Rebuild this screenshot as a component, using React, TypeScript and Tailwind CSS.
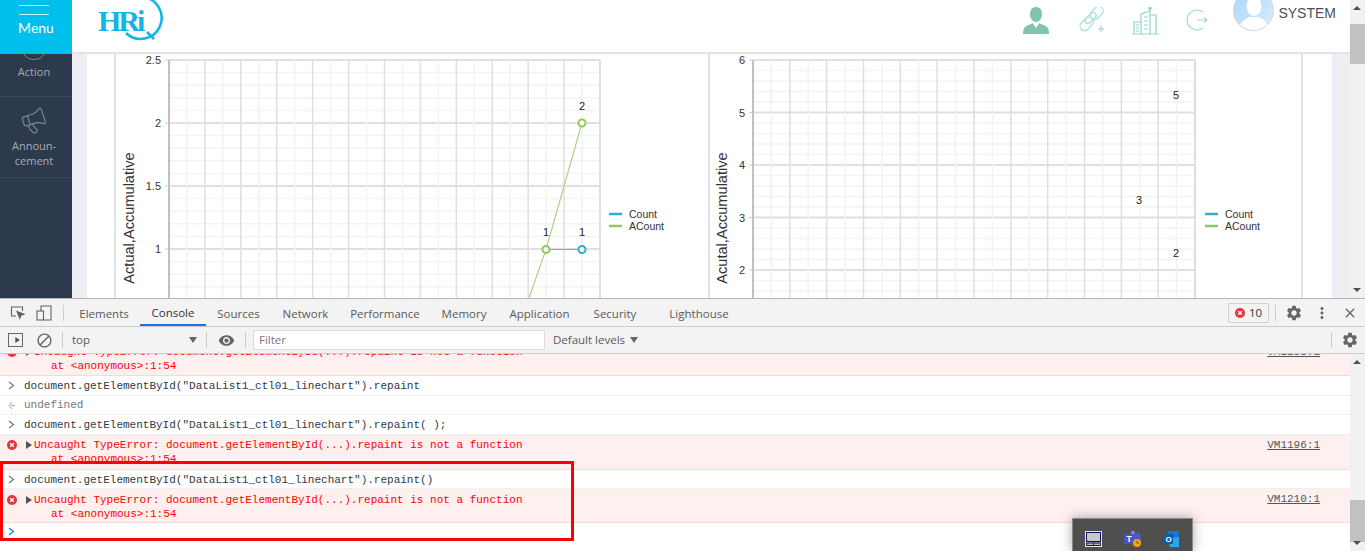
import { Megaphone } from "lucide-react";
import {
  MdBlock,
  MdClose,
  MdMoreVert,
  MdPlayArrow,
  MdSettings,
  MdVisibility,
} from "react-icons/md";

const TABS = [
  { label: "Elements", cls: "w-[72px]" },
  { label: "Console", cls: "w-[66px] text-[#333] border-b-2 border-[#1a73e8]" },
  { label: "Sources", cls: "w-[65px]" },
  { label: "Network", cls: "w-[69px]" },
  { label: "Performance", cls: "w-[90px]" },
  { label: "Memory", cls: "w-[68px]" },
  { label: "Application", cls: "w-[83px]" },
  { label: "Security", cls: "w-[68px]" },
  { label: "Lighthouse", cls: "ml-[9px] w-[82px]" },
];

const INPUT_1 = 'document.getElementById("DataList1_ctl01_linechart").repaint';
const RED = "text-[#ff0000]";

function range(n: number) {
  return Array.from({ length: n }, (_, i) => i);
}

type ChartProps = {
  title: string;
  titleX: number;
  plotX: number;
  plotW: number;
  firstY: number;
  stepY: number;
  ticks: string[];
  legendGap?: number;
  children?: React.ReactNode;
};

function Chart({ title, titleX, plotX, plotW, firstY, stepY, ticks, legendGap = 9, children }: ChartProps) {
  const stepX = plotW / 12;
  const minorY = stepY / 5;
  const count = Math.ceil((244 - firstY) / minorY);
  const legendX = plotX + plotW + legendGap;
  return (
    <div className="w-[594px] h-full border-l-2 border-[#e3e3e3] last:border-r-2 last:w-[595px]">
      <svg width="592" height="244" className="block font-['Liberation_Sans',sans-serif]">
        {range(count).map((i) => (
          <line
            key={i}
            x1={plotX}
            x2={plotX + plotW}
            y1={firstY + i * minorY}
            y2={firstY + i * minorY}
            stroke={i % 5 === 0 ? "#e0e0e0" : "#f3f3f3"}
            strokeWidth={i % 5 === 0 ? 2 : 1.5}
          />
        ))}
        {range(25).map((i) => (
          <line
            key={i}
            x1={plotX + (i * stepX) / 2}
            x2={plotX + (i * stepX) / 2}
            y1={firstY}
            y2={244}
            stroke={i % 2 === 0 ? "#dfdfdf" : "#f3f3f3"}
            strokeWidth={i === 24 ? 2 : 1.5}
          />
        ))}
        <line x1={plotX} x2={plotX} y1={firstY} y2={244} stroke="#999" />
        {ticks.map((t, i) => (
          <g key={t}>
            <line
              x1={plotX - 4}
              x2={plotX}
              y1={firstY + i * stepY}
              y2={firstY + i * stepY}
              stroke="#ccc"
            />
            <text
              x={plotX - 8}
              y={firstY + i * stepY + 4}
              textAnchor="end"
              fontSize="11"
              fill="#333"
            >
              {t}
            </text>
          </g>
        ))}
        <text
          transform={`translate(${titleX},164) rotate(-90)`}
          textAnchor="middle"
          fontSize="14.6"
          fill="#333"
        >
          {title}
        </text>
        <line x1={legendX} x2={legendX + 13} y1={160} y2={160} stroke="#31aecb" strokeWidth="2.5" />
        <line x1={legendX} x2={legendX + 13} y1={172} y2={172} stroke="#8fca55" strokeWidth="2.5" />
        <text x={legendX + 20} y={164} fontSize="10.5" fill="#333">
          Count
        </text>
        <text x={legendX + 20} y={176} fontSize="10.5" fill="#333">
          ACount
        </text>
        {children}
      </svg>
    </div>
  );
}

function DataLabel({ x, y, v }: { x: number; y: number; v: string }) {
  return (
    <text x={x} y={y} textAnchor="middle" fontSize="11" fill="#222">
      {v}
    </text>
  );
}

function ErrorIcon() {
  return (
    <svg width="10" height="10" viewBox="0 0 10 10" className="shrink-0">
      <circle cx="5" cy="5" r="5" fill="#e8323c" />
      <path d="M3.2 3.2l3.6 3.6M6.8 3.2l-3.6 3.6" stroke="#fff" strokeWidth="1.4" />
    </svg>
  );
}

function Chevron({ color = "#777" }: { color?: string }) {
  return (
    <svg width="7" height="9" viewBox="0 0 7 9" className="shrink-0">
      <path d="M1 1l4.5 3.5L1 8" fill="none" stroke={color} strokeWidth="1.2" />
    </svg>
  );
}

function InputRow({ text, cls = "h-[20px]" }: { text: string; cls?: string }) {
  return (
    <div className={`${cls} flex items-center pl-[8px] border-b border-[#efefef] text-[#303942]`}>
      <Chevron />
      <span className="ml-[9px]">{text}</span>
    </div>
  );
}

function ErrorRow({ source, cls = "h-[35px] pt-[3px]" }: { source: string; cls?: string }) {
  return (
    <div className={`${cls} relative bg-[#fff0f0] border-b border-[#ffd6d6] pl-[7px] overflow-hidden`}>
      <div className="flex items-center h-[14px]">
        <ErrorIcon />
        <span className="ml-[9px] mr-[2px] w-0 h-0 border-y-[4px] border-y-transparent border-l-[6px] border-l-[#555]" />
        <span className={RED}>Uncaught TypeError: document.getElementById(...).repaint is not a function</span>
      </div>
      <div className={`${RED} h-[14px] leading-[14px] pl-[44px]`}>at &lt;anonymous&gt;:1:54</div>
      <span className="absolute right-[30px] top-[3px] leading-[14px] underline text-[#555]">{source}</span>
    </div>
  );
}

function TopIcons() {
  return (
    <div className="ml-auto flex items-start h-full">
      <svg width="28" height="28" viewBox="0 0 28 28" className="mt-[6px]" fill="#7fc4ab">
        <path d="M14 1c4 0 6 3 6 7 0 4-2.500 8-6 8s-6-4-6-8c0-4 2-7 6-7z" />
        <path d="M1 28c0-3 .5-6 2.500-7.500C6 19 9 18.500 10.500 17l3.500 5 3.500-5c1.500 1.500 4.500 2 7 3.500 2 1.500 2.500 4.500 2.500 7.500z" />
      </svg>
      <svg width="28" height="28" viewBox="0 0 28 28" className="ml-[28px] mt-[7px]" fill="none" stroke="#a9e0df" strokeWidth="1.3">
        <rect x="12" y="1.500" width="15" height="9" rx="4.500" transform="rotate(-45 19 7)" />
        <rect x="1" y="13" width="15" height="9" rx="4.500" transform="rotate(-45 8 17)" />
        <rect x="7" y="8" width="13" height="6" rx="3" transform="rotate(-45 13 12)" />
        <path d="M20 22h6M23 19v6" stroke="#b7d8d4" />
      </svg>
      <svg width="28" height="28" viewBox="0 0 28 28" className="ml-[26px] mt-[7px]" fill="none" stroke="#8ed8cf" strokeWidth="1.2">
        <path d="M0 27h27M2 27V15h7v12M9 27V7l9-3v23M18 8h6v19M18 1v3M4 18h3M4 21h3M4 24h3M12 10h4M12 14h4M12 18h4M12 22h4" />
        <circle cx="18" cy="1.500" r="1.200" fill="#8ed8cf" />
      </svg>
      <svg width="24" height="24" viewBox="0 0 24 24" className="ml-[26px] mt-[8px]" fill="none" stroke="#93dccf" strokeWidth="1.100">
        <path d="M17 4A10 10 0 1 0 17 20" />
        <path d="M11 12h10M18 9.500l3 2.500-3 2.500" />
      </svg>
      <div className="ml-[23px] w-[41px] h-[41px] -mt-[10px] rounded-full border border-[#d5d5d5] bg-[linear-gradient(135deg,#a9d5fb,#d9eeff)] overflow-hidden shrink-0">
        <svg width="40" height="40" viewBox="0 0 40 40" fill="#fff">
          <ellipse cx="20" cy="15" rx="7.500" ry="10" />
          <path d="M5 40c0-9 6-12 11-14h8c5 2 11 5 11 14z" />
        </svg>
      </div>
      <span className="ml-[4px] mr-[14px] mt-[3px] text-[14px] leading-[20px] text-[#4a4f5c] font-['Liberation_Sans',sans-serif]">
        SYSTEM
      </span>
    </div>
  );
}

function Logo() {
  return (
    <div className="relative ml-[26px] w-[70px] h-[42px] overflow-visible">
      <span className="absolute left-0 top-[5px] text-[30px] leading-[32px] font-bold text-[#12b5e5] font-['Liberation_Serif',serif] tracking-[-3px]">
        HRi
      </span>
      <svg width="46" height="50" viewBox="0 0 46 50" className="absolute left-[22px] -top-[8px]" fill="none" stroke="#12b5e5" strokeWidth="2.6">
        <path d="M6 41A21 21 0 1 0 22 5" />
        <path d="M27 40l7 7" />
      </svg>
    </div>
  );
}

function ScrollBar({ thumb, track = "" }: { thumb: string; track?: string }) {
  return (
    <div className={`w-[15px] shrink-0 bg-[#f1f1f1] relative ${track}`}>
      <span className="absolute left-[3px] top-[6px] w-0 h-0 border-x-[4px] border-x-transparent border-b-[4px] border-b-[#505050]" />
      <div className={`absolute left-0 right-0 bg-[#c1c1c1] ${thumb}`} />
      <span className="absolute left-[3px] bottom-[6px] w-0 h-0 border-x-[4px] border-x-transparent border-t-[4px] border-t-[#505050]" />
    </div>
  );
}

export default function App() {
  return (
    <div className="relative w-[1365px] h-[551px] overflow-hidden flex flex-col bg-white">
      {/* page */}
      <div className="h-[298px] flex shrink-0">
        <div className="w-[1350px] flex flex-col">
          <header className="h-[54px] shrink-0 flex items-start border-b-2 border-[#e4e4e4] bg-white">
            <div className="w-[72px] h-[54px] shrink-0 bg-[#00bfec] flex flex-col items-center text-white font-['Lato',sans-serif]">
              <span className="mt-[5px] mr-[4px] w-[30px] h-px bg-white/80" />
              <span className="mt-[8px] mr-[4px] w-[30px] h-px bg-white/80" />
              <span className="mt-[3px] text-[14px] leading-[20px]">Menu</span>
            </div>
            <Logo />
            <TopIcons />
          </header>
          <div className="flex-1 flex min-h-0">
            <aside className="w-[72px] shrink-0 bg-[#2d394c] text-[#a5adb8] text-[11px] font-['Open_Sans',sans-serif] overflow-hidden">
              <div className="h-[43px] pr-[4px] border-b border-[#3c485a] flex flex-col items-center">
                <span className="-mt-[16px] w-[24px] h-[22px] rounded-full border border-[#7c8591] shrink-0" />
                <span className="mt-[5px] leading-[14px]">Action</span>
              </div>
              <div className="h-[81px] pr-[4px] border-b border-[#3c485a] flex flex-col items-center">
                <Megaphone size={28} strokeWidth={1} className="mt-[10px] text-[#7d8793] -rotate-[18deg]" />
                <span className="mt-[3px] leading-[15px] text-center">
                  Announ-
                  <br />
                  cement
                </span>
              </div>
            </aside>
            <div className="flex-1 min-w-0 bg-[#eceef3] pl-[15px] pr-[18px]">
              <div className="h-full bg-white flex pl-[27px]">
                <Chart
                  title="Actual,Accumulative"
                  titleX={17.5}
                  plotX={53}
                  plotW={431}
                  firstY={6}
                  stepY={63}
                  ticks={["2.5", "2", "1.5", "1"]}
                >
                  <path d="M413 244L430 195.500L466 69" fill="none" stroke="#a5d47c" strokeWidth="1.1" />
                  <line x1="430" x2="466" y1="195.500" y2="195.500" stroke="#5cb7cb" strokeWidth="1.2" />
                  <circle cx="466" cy="195.500" r="3.500" fill="#fff" stroke="#31aecb" strokeWidth="2" />
                  <circle cx="430" cy="195.500" r="3.500" fill="#fff" stroke="#8fca55" strokeWidth="2" />
                  <circle cx="466" cy="69" r="3.500" fill="#fff" stroke="#8fca55" strokeWidth="2" />
                  <DataLabel x={430} y={182} v="1" />
                  <DataLabel x={466} y={182} v="1" />
                  <DataLabel x={466} y={56} v="2" />
                </Chart>
                <Chart
                  title="Acutal,Accumulative"
                  titleX={17}
                  plotX={43}
                  plotW={442}
                  firstY={6}
                  stepY={52.500}
                  ticks={["6", "5", "4", "3", "2"]}
                  legendGap={10}
                >
                  <DataLabel x={466} y={45} v="5" />
                  <DataLabel x={429} y={150} v="3" />
                  <DataLabel x={466} y={203} v="2" />
                </Chart>
              </div>
            </div>
          </div>
        </div>
        <ScrollBar thumb="top-[24px] h-[40px]" />
      </div>

      {/* devtools */}
      <div className="flex-1 min-h-0 flex flex-col border-t border-[#b5b5b5]">
        <div className="h-[28px] shrink-0 flex items-stretch bg-[#f3f3f3] border-b border-[#ccc] text-[12px] text-[#5a5a5a] font-['Open_Sans',sans-serif]">
          <div className="w-[68px] flex items-center shrink-0 pl-[10px]">
            <svg width="15" height="15" viewBox="0 0 15 15" fill="none" stroke="#5f6368" strokeWidth="1.100">
              <path d="M6 11H1.500V2h11v4" />
              <path d="M7 6.500l7 2.700-3 1.100-1.200 3z" fill="#5f6368" />
            </svg>
            <svg width="16" height="16" viewBox="0 0 16 16" className="ml-[11px]" fill="none" stroke="#5f6368" strokeWidth="1.100">
              <path d="M5 6V1h10v14H8" />
              <rect x="1" y="6" width="6.500" height="9" />
            </svg>
            <span className="ml-[11px] w-px h-[16px] bg-[#ccc]" />
          </div>
          {TABS.map((t) => (
            <div key={t.label} className={`${t.cls} shrink-0 flex items-center justify-center pt-[2px] text-[11.5px]`}>
              {t.label}
            </div>
          ))}
          <div className="ml-auto flex items-center">
            <div className="w-[41px] h-[20px] border border-[#d0d0d0] rounded-[2px] flex items-center justify-center gap-[4px] text-[#333]">
              <ErrorIcon />
              <span className="text-[11.5px]">10</span>
            </div>
            <span className="ml-[6px] w-px h-[16px] bg-[#ccc]" />
            <MdSettings size={18} className="ml-[9px] text-[#666]" />
            <MdMoreVert size={18} className="ml-[10px] text-[#666]" />
            <MdClose size={16} className="ml-[11px] mr-[7px] text-[#666]" />
          </div>
        </div>
        <div className="h-[27px] shrink-0 flex items-center bg-[#f3f3f3] border-b border-[#ccc] text-[12px] text-[#5a5a5a] font-['Open_Sans',sans-serif]">
          <div className="ml-[8px] w-[15px] h-[14px] border border-[#666] flex items-center justify-center">
            <MdPlayArrow size={12} className="ml-[3px] text-[#555]" />
          </div>
          <MdBlock size={17} className="ml-[13px] text-[#666]" />
          <span className="ml-[9px] w-px h-[16px] bg-[#ccc]" />
          <span className="ml-[9px] w-[117px] text-[11.5px]">top</span>
          <span className="w-0 h-0 border-x-[4px] border-x-transparent border-t-[6px] border-t-[#666]" />
          <span className="ml-[9px] w-px h-[16px] bg-[#ccc]" />
          <MdVisibility size={17} className="ml-[11px] text-[#666]" />
          <span className="ml-[10px] w-px h-[16px] bg-[#ccc]" />
          <div className="ml-[7px] w-[292px] h-[20px] bg-white border border-[#dcdcdc] pl-[5px] flex items-center text-[#777] text-[11.5px]">
            Filter
          </div>
          <span className="ml-[8px] text-[11.5px]">Default levels</span>
          <span className="ml-[5px] w-0 h-0 border-x-[4px] border-x-transparent border-t-[6px] border-t-[#666]" />
          <div className="ml-auto flex items-center">
            <span className="w-px h-[16px] bg-[#ccc]" />
            <MdSettings size={18} className="ml-[9px] mr-[6px] text-[#666]" />
          </div>
        </div>

        {/* console */}
        <div className="flex-1 min-h-0 flex">
          <div className="flex-1 min-w-0 overflow-hidden text-[11px] leading-[14px] font-['Liberation_Mono',monospace] bg-white">
            <div className="-mt-[12px]">
              <ErrorRow source="VM1188:1" cls="h-[34px] pt-[3px]" />
            </div>
            <InputRow text={INPUT_1} />
            <div className="h-[19px] flex items-center pl-[8px] border-b border-[#efefef] text-[#777]">
              <svg width="7" height="9" viewBox="0 0 7 9" className="shrink-0">
                <path d="M4 1L1 4.500L4 8M3 4.500h4" fill="none" stroke="#aaa" />
              </svg>
              <span className="ml-[9px]">undefined</span>
            </div>
            <InputRow text={`${INPUT_1}( );`} />
            <ErrorRow source="VM1196:1" />
            <InputRow text={`${INPUT_1}()`} cls="h-[19px] pt-[1px]" />
            <ErrorRow source="VM1210:1" cls="h-[34px] pt-[4px]" />
            <div className="h-[17px] flex items-center pl-[8px]">
              <Chevron color="#1a73e8" />
            </div>
          </div>
          <ScrollBar thumb="top-[146px] h-[42px]" />
        </div>
      </div>

      {/* annotation over the console */}
      <div className="absolute left-0 top-[461px] w-[574px] h-[80px] border-[3px] border-[#ff0000] pointer-events-none" />

      {/* taskbar flyout */}
      <div className="absolute left-[1072px] top-[518px] w-[121px] h-[33px] bg-[#4f4f4f] border border-[#8a8a8a] border-b-0 shadow-[0_0_12px_rgba(0,0,0,0.35)] flex items-center pl-[12px] pt-[8px] gap-[22px]">
        <svg width="17" height="16" viewBox="0 0 17 16">
          <rect x=".5" y=".5" width="16" height="15" fill="#bdbdbd" stroke="#e6e6e6" />
          <rect x="1.500" y="1.500" width="14" height="9" fill="#c8c8c8" stroke="#11116b" />
          <path d="M1.500 12h14v2.500h-14zM8.500 12v2.500" fill="#bdbdbd" stroke="#11116b" />
        </svg>
        <svg width="18" height="18" viewBox="0 0 18 18" className="font-['Liberation_Sans',sans-serif]">
          <circle cx="9" cy="3" r="2.200" fill="#7b83eb" />
          <circle cx="14" cy="4" r="1.700" fill="#5059c9" />
          <rect x="8" y="5" width="9" height="9" rx="2" fill="#5059c9" />
          <rect x="0" y="4" width="10" height="10" rx="1" fill="#4b53bc" />
          <text x="5" y="12" textAnchor="middle" fontSize="8.500" fontWeight="bold" fill="#fff">
            T
          </text>
          <circle cx="13" cy="13" r="4" fill="#f0a30a" />
          <path d="M13 11v2.300h1.700" stroke="#4f4f4f" fill="none" />
        </svg>
        <svg width="16" height="16" viewBox="0 0 16 16" className="font-['Liberation_Sans',sans-serif]">
          <rect x="4" y="0" width="11" height="8" fill="#0f78d4" />
          <path d="M4 7l11-1v10H6z" fill="#28a8ea" />
          <rect x="0" y="3" width="9" height="10" fill="#0a5ea8" />
          <text x="4.500" y="11" textAnchor="middle" fontSize="8" fontWeight="bold" fill="#fff">
            O
          </text>
        </svg>
      </div>
    </div>
  );
}
